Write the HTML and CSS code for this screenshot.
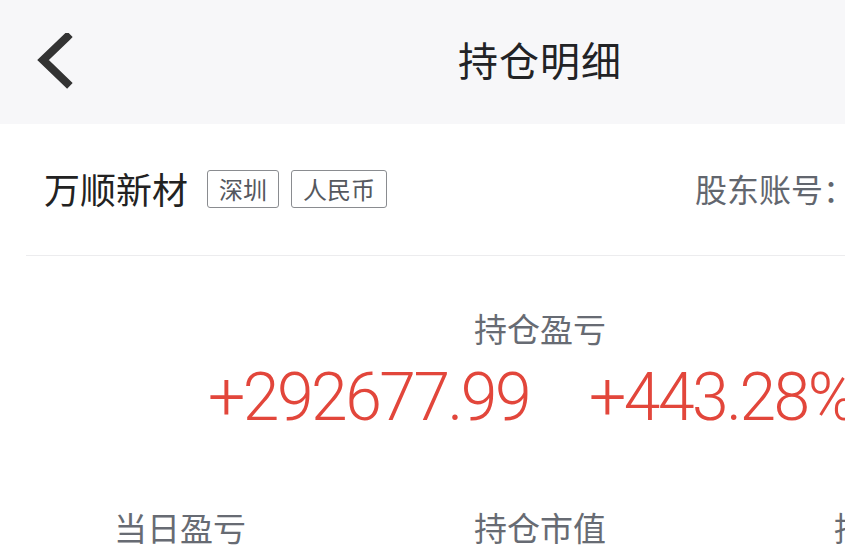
FILE: index.html
```html
<!DOCTYPE html>
<html lang="zh-CN">
<head>
<meta charset="utf-8">
<title>持仓明细</title>
<link rel="stylesheet" href="styles.css">
</head>
<body>
<div class="page">
  <header class="nav">
    <div class="nav-left">
      <svg class="back" width="40" height="60" viewBox="0 0 40 60">
        <polyline points="31,4 7,27 31,50" fill="none" stroke="#333" stroke-width="8" stroke-linecap="square" stroke-linejoin="miter"/>
      </svg>
    </div>
    <h1 class="nav-title">持仓明细</h1>
    <div class="nav-right"></div>
  </header>

  <section class="info">
    <div class="info-row">
      <span class="stock-name">万顺新材</span>
      <span class="tag">深圳</span>
      <span class="tag">人民币</span>
      <span class="account">股东账号：</span>
    </div>
  </section>

  <section class="profit">
    <div class="label">持仓盈亏</div>
    <div class="profit-values">
      <span class="big-num">+292677.99</span>
      <span class="big-num">+443.28%</span>
    </div>
  </section>

  <section class="stats">
    <div class="stat"><div class="label">当日盈亏</div></div>
    <div class="stat"><div class="label">持仓市值</div></div>
    <div class="stat"><div class="label">持仓成本</div></div>
  </section>
</div>
</body>
</html>
```

FILE: styles.css
```css
* { box-sizing: border-box; }
html, body { margin: 0; padding: 0; background: #ffffff; overflow: hidden; }
body {
  font-family: "Noto Sans CJK SC", "Noto Sans", sans-serif;
  color: #222;
}
.page {
  width: 1080px;
}
.nav {
  height: 124px;
  background: #f7f7f9;
  display: grid;
  grid-template-columns: 1fr auto 1fr;
  align-items: center;
}
.nav-left {
  padding-left: 36px;
  display: flex;
  align-items: center;
  padding-top: 2px;
}
.back { display: block; }
.nav-title {
  margin: 0 0 6px;
  font-size: 40px;
  font-weight: 400;
  line-height: 50px;
  color: #222326;
  letter-spacing: 1px;
}
.info {
  padding-left: 26px;
}
.info-row {
  height: 132px;
  display: flex;
  align-items: center;
  padding-left: 18px;
  padding-right: 222px;
  border-bottom: 1px solid #ececee;
}
.stock-name {
  font-size: 36px;
  line-height: 44px;
  color: #222;
  margin-right: 19px;
  margin-bottom: 4px;
}
.tag {
  font-size: 24px;
  line-height: 36px;
  height: 38px;
  padding: 0 11px;
  border: 1px solid #8a8c90;
  border-radius: 3px;
  color: #55585e;
  margin-right: 12px;
  margin-bottom: 1px;
}
.account {
  margin-left: auto;
  font-size: 32px;
  line-height: 40px;
  color: #62666e;
  margin-right: 3px;
  margin-bottom: 4px;
}
.profit {
  padding-top: 52px;
  display: flex;
  flex-direction: column;
  align-items: center;
}
.label {
  font-size: 33px;
  line-height: 40px;
  color: #676b73;
}
.profit-values {
  margin-top: 10px;
  display: flex;
  justify-content: center;
  gap: 60px;
  height: 80px;
  align-items: center;
  padding-right: 18px;
}
.big-num {
  font-family: Roboto, "Liberation Sans", sans-serif;
  font-weight: 300;
  font-size: 66px;
  line-height: 80px;
  letter-spacing: -2.5px;
  color: #e2463b;
}
.stats {
  margin-top: 69px;
  display: grid;
  grid-template-columns: repeat(3, 360px);
}
.stat {
  display: flex;
  justify-content: center;
}
```
